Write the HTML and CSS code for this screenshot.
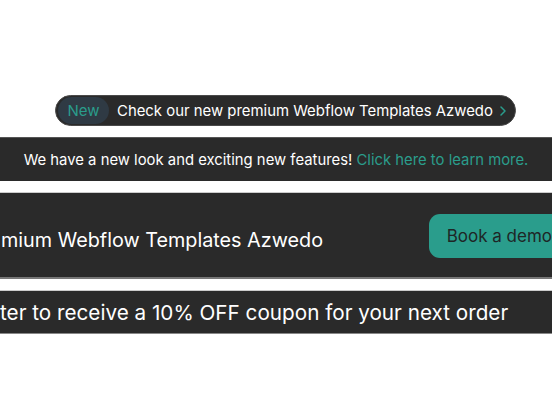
FILE: index.html
```html
<!DOCTYPE html>
<html lang="en">
<head>
    <meta charset="UTF-8">
    <meta name="viewport" content="width=device-width, initial-scale=1.0">
    <title>Banners</title>
    <link rel="stylesheet" href="styles.css">
</head>
<body>
    <div class="page">
        <!-- pill -->
        <a class="pill" href="#">
            <span class="pill-new">New</span>
            <span class="pill-text">Check our new premium Webflow Templates Azwedo</span>
            <svg class="pill-arrow" width="8" height="12" viewBox="0 0 8 12"><path d="M2 2l4 4-4 4" fill="none" stroke="#2a9d8c" stroke-width="1.5" stroke-linecap="round" stroke-linejoin="round"/></svg>
        </a>

        <!-- barra anuncio -->
        <div class="bar bar-small">
            <p>We have a new look and exciting new features! <a href="#">Click here to learn more.</a></p>
        </div>

        <!-- barra con boton -->
        <div class="bar bar-big">
            <p>mium Webflow Templates Azwedo</p>
            <button class="demo">Book a demo</button>
        </div>

        <!-- barra cupon -->
        <div class="bar bar-coupon">
            <p>ter to receive a 10% OFF coupon for your next order</p>
        </div>
    </div>
</body>
</html>
```

FILE: styles.css
```css
body {
    margin: 0;
    background: #fff;
    font-family: Inter, "Noto Sans", sans-serif;
    overflow: hidden;
}
.page {
    display: flex;
    flex-direction: column;
    padding-top: 95px;
    gap: 11px;
}
.pill {
    align-self: flex-start;
    margin-left: 55px;
    width: 461px;
    height: 31px;
    box-sizing: border-box;
    display: flex;
    align-items: center;
    padding: 2px;
    background: #2a2a2a;
    border: 1px solid #4a4a4a;
    border-radius: 16px;
    text-decoration: none;
    white-space: nowrap;
}
.pill-new {
    height: 27px;
    width: 51px;
    justify-content: center;
    display: flex;
    align-items: center;
    background: #2f3a44;
    border-radius: 14px;
    color: #2a9d8c;
    font-size: 15px;
}
.pill-text {
    margin-left: 8px;
    color: #fff;
    font-size: 14.9px;
}
.pill-arrow {
    margin-left: 6px;
}
.bar {
    background: #2a2a2a;
    color: #fff;
    display: flex;
    align-items: center;
    box-sizing: border-box;
}
.bar p {
    margin: 0;
    white-space: nowrap;
}
.bar-small {
    height: 44px;
    justify-content: center;
    border-top: 1px solid #555;
    font-size: 14.85px;
}
.bar-small a {
    color: #2a9d8c;
    text-decoration: none;
}
.bar-big {
    height: 87px;
    padding-top: 9px;
    justify-content: space-between;
    border-top: 1px solid #ccc;
    border-bottom: 2px solid #777;
    font-size: 19.8px;
}
.bar-big p {
    margin-left: 1px;
}
.demo {
    height: 44px;
    margin-right: -18px;
    margin-top: -8px;
    padding: 0 18px;
    background: #2a9d8c;
    border: none;
    border-radius: 11px;
    color: #1e2626;
    font-family: Inter, "Noto Sans", sans-serif;
    font-size: 17px;
}
.bar-coupon {
    height: 44px;
    border-top: 1px solid #ccc;
    border-bottom: 1px solid #888;
    font-size: 20.7px;
}
```
